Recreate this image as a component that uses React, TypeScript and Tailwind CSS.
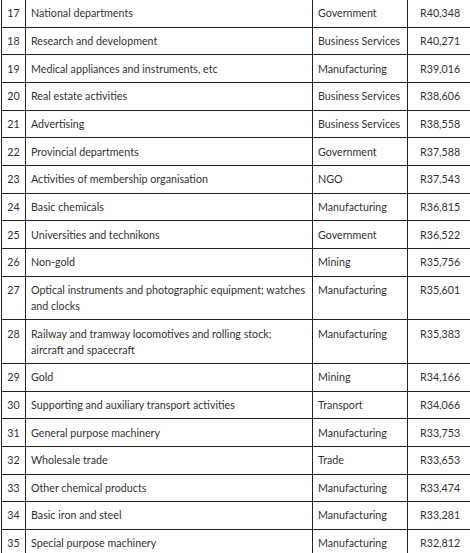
const rows: { n: number; name: string[]; sector: string; pay: string }[] = [
  { n: 17, name: ['National departments'], sector: 'Government', pay: 'R40,348' },
  { n: 18, name: ['Research and development'], sector: 'Business Services', pay: 'R40,271' },
  { n: 19, name: ['Medical appliances and instruments, etc'], sector: 'Manufacturing', pay: 'R39,016' },
  { n: 20, name: ['Real estate activities'], sector: 'Business Services', pay: 'R38,606' },
  { n: 21, name: ['Advertising'], sector: 'Business Services', pay: 'R38,558' },
  { n: 22, name: ['Provincial departments'], sector: 'Government', pay: 'R37,588' },
  { n: 23, name: ['Activities of membership organisation'], sector: 'NGO', pay: 'R37,543' },
  { n: 24, name: ['Basic chemicals'], sector: 'Manufacturing', pay: 'R36,815' },
  { n: 25, name: ['Universities and technikons'], sector: 'Government', pay: 'R36,522' },
  { n: 26, name: ['Non-gold'], sector: 'Mining', pay: 'R35,756' },
  {
    n: 27,
    name: ['Optical instruments and photographic equipment; watches', 'and clocks'],
    sector: 'Manufacturing',
    pay: 'R35,601',
  },
  {
    n: 28,
    name: ['Railway and tramway locomotives and rolling stock;', 'aircraft and spacecraft'],
    sector: 'Manufacturing',
    pay: 'R35,383',
  },
  { n: 29, name: ['Gold'], sector: 'Mining', pay: 'R34,166' },
  { n: 30, name: ['Supporting and auxiliary transport activities'], sector: 'Transport', pay: 'R34,066' },
  { n: 31, name: ['General purpose machinery'], sector: 'Manufacturing', pay: 'R33,753' },
  { n: 32, name: ['Wholesale trade'], sector: 'Trade', pay: 'R33,653' },
  { n: 33, name: ['Other chemical products'], sector: 'Manufacturing', pay: 'R33,474' },
  { n: 34, name: ['Basic iron and steel'], sector: 'Manufacturing', pay: 'R33,281' },
  { n: 35, name: ['Special purpose machinery'], sector: 'Manufacturing', pay: 'R32,812' },
]

export default function App() {
  return (
    <div className="h-[553px] w-[470px] overflow-hidden bg-white pl-px font-['Lato',sans-serif] text-[10.7px] leading-[16px] text-[#333]">
      <table className="-mt-px w-[475px] table-fixed border-separate border-spacing-0">
        <colgroup>
          <col className="w-[25px]" />
          <col className="w-[287px]" />
          <col className="w-[95px]" />
          <col className="w-[68px]" />
        </colgroup>
        <tbody>
          {rows.map((r, i) => (
            <tr key={r.n}>
              {/* rank */}
              <td
                className={`border-x border-b border-[#222] py-[5.33px] text-center align-top ${
                  i === 0 ? 'border-t' : ''
                }`}
              >
                {r.n}
              </td>

              {/* industry */}
              <td
                className={`border-r border-b border-[#222] px-[5px] py-[5.33px] align-top ${
                  i === 0 ? 'border-t' : ''
                }`}
              >
                {r.name.map((line, k) => (
                  <span key={k} className="block whitespace-nowrap">
                    {line}
                  </span>
                ))}
              </td>

              {/* sector */}
              <td
                className={`whitespace-nowrap border-r border-b border-[#222] px-[5px] py-[5.33px] align-top ${
                  i === 0 ? 'border-t' : ''
                }`}
              >
                {r.sector}
              </td>

              {/* average pay */}
              <td
                className={`whitespace-nowrap border-r border-b border-[#222] pl-[12px] py-[5.33px] align-top ${
                  i === 0 ? 'border-t' : ''
                }`}
              >
                {r.pay}
              </td>
            </tr>
          ))}
        </tbody>
      </table>
    </div>
  )
}
